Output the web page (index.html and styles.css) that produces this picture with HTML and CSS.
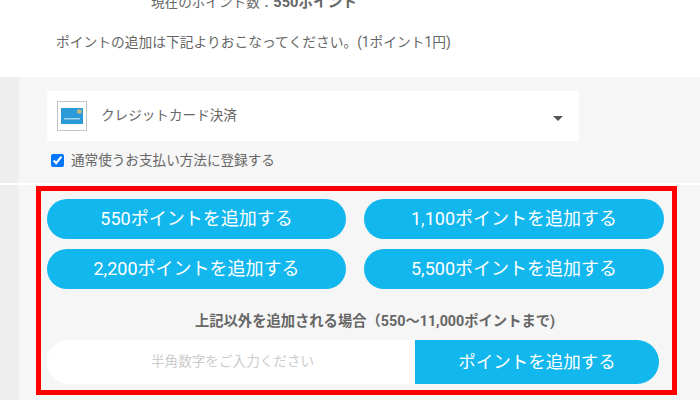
FILE: index.html
```html
<!DOCTYPE html>
<html lang="ja">
<head>
    <meta charset="UTF-8">
    <title>ポイントの追加</title>
    <link rel="stylesheet" href="styles.css">
</head>
<body>
    <div class="intro">
        <p class="current">現在のポイント数：<b>550ポイント</b></p>
        <p class="note">ポイントの追加は下記よりおこなってください。(1ポイント1円)</p>
    </div>
    <div class="panel">
        <div class="payment">
            <div class="select-box">
                <span class="card-icon">
                    <svg width="22" height="16" viewBox="0 0 22 16">
                        <rect width="22" height="16" fill="#2a9bd8"/>
                        <rect x="16" y="1.5" width="4.5" height="4" rx="1" fill="#c9b77a"/>
                        <rect x="3" y="10" width="16" height="1.5" fill="#a5d3ee"/>
                    </svg>
                </span>
                <span class="select-label">クレジットカード決済</span>
                <span class="select-arrow"></span>
            </div>
            <label class="register">
                <input type="checkbox" checked>
                <span>通常使うお支払い方法に登録する</span>
            </label>
        </div>
        <div class="divider"></div>
        <div class="highlight">
            <div class="amounts">
                <button class="amount-btn">550ポイントを追加する</button>
                <button class="amount-btn">1,100ポイントを追加する</button>
                <button class="amount-btn">2,200ポイントを追加する</button>
                <button class="amount-btn">5,500ポイントを追加する</button>
            </div>
            <p class="other">上記以外を追加される場合（550～11,000ポイントまで)</p>
            <div class="custom">
                <input class="custom-input" type="text" placeholder="半角数字をご入力ください">
                <button class="custom-btn">ポイントを追加する</button>
            </div>
        </div>
    </div>
</body>
</html>
```

FILE: styles.css
```css
* {
    box-sizing: border-box;
}

html, body {
    height: 400px;
    overflow: hidden;
}

body {
    margin: 0;
    font-family: Roboto, "Noto Sans CJK JP", sans-serif;
    color: #666666;
    background-color: #ffffff;
}

button, input {
    font-family: inherit;
}

.intro {
    height: 77px;
    overflow: hidden;
}

.current {
    margin: -8px 0 0 151px;
    font-size: 13.6px;
    line-height: 20px;
}

.current b {
    font-size: 14.6px;
}

.note {
    margin: 20px 0 0 56px;
    font-size: 13.75px;
    line-height: 20px;
}

.panel {
    height: 323px;
    margin-left: 19px;
    background-color: #f6f6f6;
    box-shadow: -19px 0 0 #eeeeee;
}

.payment {
    height: 106px;
    padding: 14px 0 0 28px;
}

.select-box {
    display: flex;
    align-items: center;
    width: 532px;
    height: 50px;
    padding: 0 16px 0 10px;
    background-color: #ffffff;
}

.card-icon {
    display: flex;
    align-items: center;
    justify-content: center;
    width: 30px;
    height: 30px;
    border: 1px solid #c4c4c4;
}

.select-label {
    flex: 1;
    margin: 0 0 4px 14px;
    font-size: 13.6px;
}

.select-arrow {
    width: 0;
    height: 0;
    margin-top: 4px;
    border-left: 5px solid transparent;
    border-right: 5px solid transparent;
    border-top: 5px solid #555555;
}

.register {
    display: flex;
    align-items: center;
    margin: 10px 0 0 4px;
    font-size: 13.6px;
    line-height: 18px;
}

.register input {
    width: 13px;
    height: 13px;
    margin: 0 7px 0 0;
}

.divider {
    height: 2px;
    margin-left: -19px;
    background-color: #ffffff;
}

.highlight {
    width: 641px;
    height: 209px;
    margin: 1px 0 0 17px;
    padding: 8px 0 0 6px;
    border: 5px solid #ff0000;
}

.amounts {
    display: grid;
    grid-template-columns: 299px 300px;
    column-gap: 18px;
    row-gap: 10px;
}

.amount-btn {
    height: 40px;
    padding: 0 0 4px;
    border: none;
    border-radius: 20px;
    background-color: #12b7ee;
    color: #ffffff;
    font-size: 18px;
}

.other {
    width: 618px;
    margin: 22px 0 0;
    padding-left: 38px;
    text-align: center;
    font-size: 14.3px;
    font-weight: bold;
    line-height: 20px;
}

.custom {
    display: flex;
    width: 612px;
    height: 44px;
    margin-top: 9px;
}

.custom-input {
    width: 368px;
    padding: 0 0 2px 104px;
    border: none;
    border-radius: 22px 0 0 22px;
    background-color: #ffffff;
    font-size: 13.6px;
    outline: none;
}

.custom-input::placeholder {
    color: #cccccc;
}

.custom-btn {
    flex: 1;
    padding: 0 0 3px;
    border: none;
    border-radius: 0 22px 22px 0;
    background-color: #12b7ee;
    color: #ffffff;
    font-size: 17.5px;
}
```
